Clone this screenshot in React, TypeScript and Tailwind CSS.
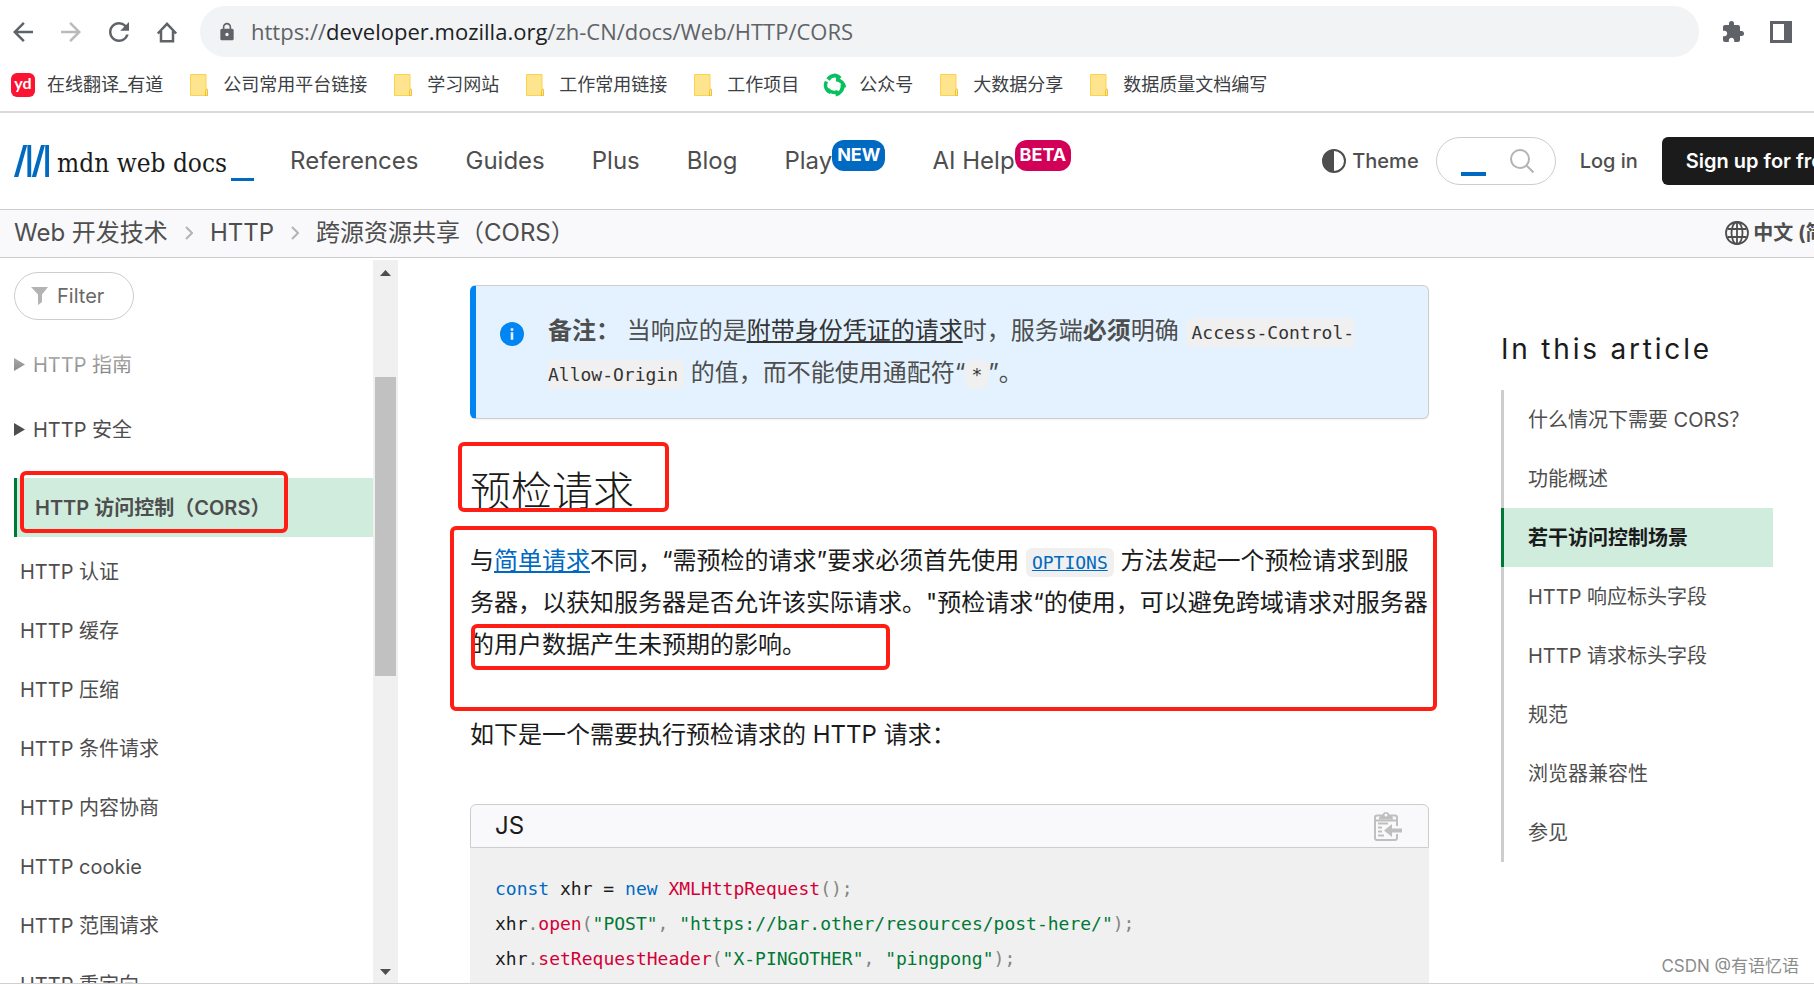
import type { ReactNode } from "react";
import {
  MdArrowBack,
  MdArrowForward,
  MdExtension,
  MdLock,
  MdRefresh,
} from "react-icons/md";

const bookmarks = [
  { label: "在线翻译_有道", icon: "youdao" },
  { label: "公司常用平台链接", icon: "folder" },
  { label: "学习网站", icon: "folder" },
  { label: "工作常用链接", icon: "folder" },
  { label: "工作项目", icon: "folder" },
  { label: "公众号", icon: "wechat" },
  { label: "大数据分享", icon: "folder" },
  { label: "数据质量文档编写", icon: "folder" },
];

const sidebarLinks = [
  "HTTP 认证",
  "HTTP 缓存",
  "HTTP 压缩",
  "HTTP 条件请求",
  "HTTP 内容协商",
  "HTTP cookie",
  "HTTP 范围请求",
  "HTTP 重定向",
];

const tocLinks = [
  "什么情况下需要 CORS？",
  "功能概述",
  "若干访问控制场景",
  "HTTP 响应标头字段",
  "HTTP 请求标头字段",
  "规范",
  "浏览器兼容性",
  "参见",
];

function HomeIcon() {
  return (
    <svg viewBox="0 0 30 30" className="size-[30px]" fill="none" stroke="currentColor" strokeWidth="2.5">
      <path d="M5.8 16.5 15 6.8l9.200 9.700M9 14v10.300h12V14" strokeLinejoin="miter" />
    </svg>
  );
}

function SidePanelIcon() {
  return (
    <svg viewBox="0 0 24 24" className="size-6" fill="currentColor">
      <path fillRule="evenodd" d="M1 1h22v22H1zM4 4v16h11V4z" />
    </svg>
  );
}

function YoudaoIcon() {
  return (
    <span className="flex size-6 items-center justify-center rounded-md bg-[#fa1432] pb-1 font-['Lato',sans-serif] text-base leading-none font-bold text-white">
      yd
    </span>
  );
}

function FolderIcon() {
  return (
    <svg viewBox="0 0 24 24" className="size-6">
      <path d="M3.500 1.500h15.500v14.500h1.500v6.500h-17z" fill="#ffe48f" stroke="#fbd44f" />
      <path d="M18.500 22.500v-5a1 1 0 0 1 2 0v5z" fill="#ffe9a6" stroke="#eec22f" />
    </svg>
  );
}

function WechatIcon() {
  return (
    <svg viewBox="0 0 24 24" className="size-6" fill="none" stroke="#07c160" strokeWidth="4">
      <path d="M5 6.500C8.500 1.500 13.500 1.500 17 5.500" />
      <path d="M13 6.500c5 .3 8 4.500 8.500 8" strokeWidth="3.500" />
      <path d="M19.500 11c1 5-2 9-7 10.500" />
      <path d="M15 18.500c-4.500 2-8 .5-10.500-2.500" strokeWidth="3.500" />
      <path d="M7.500 19.500C2.500 17.500 1.500 12 3.500 8.500" strokeWidth="3.500" />
    </svg>
  );
}

function MdnMark() {
  return (
    <svg viewBox="0 0 35 32" className="h-8 w-[35px]" fill="#0069c2">
      <path d="M9.200 0h4L4.300 32H0zM13.400 0h3.800v32h-3.800zM27 0h4l-8.900 32h-4.300zM31.200 0H35v32h-3.800z" />
    </svg>
  );
}

function ThemeIcon() {
  return (
    <svg viewBox="0 0 24 24" className="size-6" fill="#4e4e4e">
      <path fillRule="evenodd" d="M12 0a12 12 0 1 0 0 24 12 12 0 0 0 0-24zm0 2a10 10 0 0 1 0 20z" />
    </svg>
  );
}

function SearchIcon() {
  return (
    <svg viewBox="0 0 24 24" className="size-6" fill="none" stroke="#b3b3b3" strokeWidth="2">
      <circle cx="10" cy="10" r="9" />
      <path d="m16.500 16.500 7 7" />
    </svg>
  );
}

function GlobeIcon() {
  return (
    <svg viewBox="0 0 24 24" className="size-6" fill="none" stroke="#4e4e4e" strokeWidth="1.800">
      <circle cx="12" cy="12" r="11" />
      <ellipse cx="12" cy="12" rx="5.500" ry="11" />
      <path d="M12 1v22M2.500 8h19M2.500 16h19" />
    </svg>
  );
}

function FilterIcon() {
  return (
    <svg viewBox="0 0 18 18" className="size-[18px]" fill="#b3b3b3">
      <path d="M0 0h17l-6 7.500V15l-4 3V7.500z" />
    </svg>
  );
}

function InfoIcon() {
  return (
    <svg viewBox="0 0 24 24" className="mt-3 size-6 shrink-0">
      <circle cx="12" cy="12" r="12" fill="#0085f2" />
      <path d="M10.700 6.300h2.600v2.400h-2.600zM10.700 10.300h2.600v7.500h-2.600z" fill="#e3f2fe" />
    </svg>
  );
}

function CopyIcon() {
  return (
    <svg viewBox="0 0 28 30" className="h-[30px] w-7" fill="none" stroke="#bfbfbf" strokeWidth="2">
      <path d="M23 15V6.500a2 2 0 0 0-2-2H3a2 2 0 0 0-2 2V27a2 2 0 0 0 2 2h18a2 2 0 0 0 2-2v-4" />
      <path d="M5 8.500c0-3 1-4 3.500-4 0-2 1.500-3.500 3.500-3.500s3.500 1.500 3.500 3.500c2.500 0 3.500 1 3.500 4z" fill="#bfbfbf" stroke="none" />
      <circle cx="12" cy="4" r="1.500" fill="#f9f9fb" stroke="none" />
      <path d="M1 9.500h22M4 12.500h10M4 16.500h4M4 20.500h4M4 24.500h6" />
      <path d="M10 19.500 18 13v4.500h10v4H18V26z" fill="#bfbfbf" stroke="none" />
    </svg>
  );
}

// Hand-marked frame, laid over the element it highlights
function Mark({ className }: { className: string }) {
  return (
    <span
      aria-hidden="true"
      className={`pointer-events-none absolute rounded-md border-4 border-[#ff1e14] ${className}`}
    />
  );
}

function BrowserBar() {
  return (
    <div className="shrink-0 border-b-2 border-[#dadada]">
      <div className="flex items-center gap-[18px] pt-1.5 pr-[21px] pl-2 text-[#5f6368]">
        <button aria-label="Back"><MdArrowBack size={30} /></button>
        <button aria-label="Forward" className="text-[#bababc]"><MdArrowForward size={30} /></button>
        <button aria-label="Reload"><MdRefresh size={30} /></button>
        <button aria-label="Home"><HomeIcon /></button>
        <div className="flex h-[51px] flex-1 items-center gap-3.5 rounded-full bg-[#f1f3f4] pl-[17px] font-['Open_Sans',sans-serif] text-[22px]">
          <MdLock size={20} />
          <span>
            https://<span className="text-[#202124]">developer.mozilla.org</span>/zh-CN/docs/Web/HTTP/CORS
          </span>
        </div>
        <div className="flex items-center gap-6 pl-1">
          <button aria-label="Extensions"><MdExtension size={24} /></button>
          <button aria-label="Side panel"><SidePanelIcon /></button>
        </div>
      </div>
      <div className="flex h-[54px] items-center gap-6 px-[11px] pt-0.5 text-lg text-[#3c4043]">
        {bookmarks.map((item) => (
          <a key={item.label} href="#" className="flex items-center gap-3">
            {item.icon === "youdao" && <YoudaoIcon />}
            {item.icon === "folder" && <FolderIcon />}
            {item.icon === "wechat" && <WechatIcon />}
            <span>{item.label}</span>
          </a>
        ))}
      </div>
    </div>
  );
}

function Badge({ className, children }: { className: string; children: ReactNode }) {
  return (
    <span className={`-mt-3 flex h-[31px] items-center rounded-xl px-[5px] text-lg font-bold text-white ${className}`}>
      {children}
    </span>
  );
}

function SiteHeader() {
  return (
    <header className="shrink-0 border-b border-[#cdcdcd]">
      {/* The bar is wider than the window, so the sign-up button runs off the edge */}
      <div className="-mr-[45px] flex h-24 items-center pl-3.5 text-2xl whitespace-nowrap text-[#4e4e4e]">
        <a href="#" className="mr-9 flex items-center gap-2">
          <MdnMark />
          <span className="flex items-end text-[#1b1b1b]">
            <span className="pt-1 font-['DejaVu_Serif_Condensed','DejaVu_Serif',serif] text-[26px] leading-9">mdn web docs</span>
            <span className="ml-1 h-[3px] w-[23px] bg-[#0069c2]" />
          </span>
        </a>
        <nav className="flex flex-1 items-center gap-[47px]">
          <a href="#">References</a>
          <a href="#">Guides</a>
          <a href="#">Plus</a>
          <a href="#">Blog</a>
          <a href="#" className="flex items-center">
            Play<Badge className="bg-[#0069c2]">NEW</Badge>
          </a>
          <a href="#" className="flex items-center">
            AI Help<Badge className="bg-[#d30058]">BETA</Badge>
          </a>
        </nav>
        <div className="flex items-center text-xl font-medium">
          <button className="mr-[17px] flex items-center gap-1.5">
            <ThemeIcon />
            Theme
          </button>
          <form className="mr-6 flex h-12 w-[120px] items-center justify-between rounded-full border border-[#cdcdcd] pr-[21px] pl-6">
            <input
              type="search"
              aria-label="Search MDN"
              className="mt-2.5 h-5 w-[25px] appearance-none border-b-4 border-[#0069c2] outline-none"
            />
            <button type="button" aria-label="Search"><SearchIcon /></button>
          </form>
          <a href="#" className="mr-6">Log in</a>
          <a href="#" className="flex h-12 items-center rounded-md bg-[#1b1b1b] px-6 font-semibold text-white">
            Sign up for free
          </a>
        </div>
      </div>
    </header>
  );
}

function Chevron() {
  return (
    <svg viewBox="0 0 8 14" className="h-3.5 w-2" fill="none" stroke="#b3b3b3" strokeWidth="2">
      <path d="m1 1 6 6-6 6" />
    </svg>
  );
}

function Breadcrumbs() {
  return (
    <div className="shrink-0 border-b border-[#cdcdcd] bg-[#f9f9fb]">
      <div className="-mr-[39px] flex h-[47px] items-center justify-between pb-0.5 pl-3.5 text-2xl whitespace-nowrap text-[#4e4e4e]">
        <nav aria-label="Breadcrumb" className="flex items-center gap-[17px]">
          <a href="#">Web 开发技术</a>
          <Chevron />
          <a href="#">HTTP</a>
          <Chevron />
          <a href="#">跨源资源共享（CORS）</a>
        </nav>
        <button className="flex items-center gap-1 text-xl font-bold">
          <GlobeIcon />
          中文 (简体)
        </button>
      </div>
    </div>
  );
}

function SidebarGroup({ label }: { label: string }) {
  return (
    <button className="flex h-[65px] items-center gap-2">
      <svg viewBox="0 0 11 13" className="h-[13px] w-[11px]" fill="#4e4e4e">
        <path d="M0 0l11 6.500L0 13z" />
      </svg>
      {label}
    </button>
  );
}

function Sidebar() {
  return (
    <aside className="flex w-[398px] shrink-0">
      <div className="min-w-0 flex-1 pt-3 pl-3.5 text-xl text-[#4e4e4e]">
        <label className="flex h-12 w-[120px] items-center gap-2 rounded-full border border-[#cdcdcd] pl-4">
          <FilterIcon />
          <input
            type="text"
            placeholder="Filter"
            aria-label="Filter sidebar"
            className="w-16 outline-none placeholder:text-[#696969]"
          />
        </label>
        <div className="relative flex flex-col pt-3">
          <SidebarGroup label="HTTP 指南" />
          <SidebarGroup label="HTTP 安全" />
          {/* Items scroll out beneath the filter box */}
          <div className="pointer-events-none absolute inset-x-0 top-0 h-[78px] bg-linear-to-b from-white to-transparent" />
        </div>
        <ul className="mt-4">
          <li className="relative">
            <a
              href="#"
              aria-current="page"
              className="flex h-[59px] items-center border-l-[3px] border-[#007936] bg-[#d0ecdd] pl-[18px] font-semibold"
            >
              HTTP 访问控制（CORS）
            </a>
            <Mark className="-top-[7px] left-1.5 h-[62px] w-[268px]" />
          </li>
          {sidebarLinks.map((label) => (
            <li key={label}>
              <a href="#" className="flex h-[59px] items-center pt-2.5 pl-1.5">
                {label}
              </a>
            </li>
          ))}
        </ul>
      </div>
      <div aria-hidden="true" className="flex w-[25px] flex-col items-center justify-between bg-[#f0f0f0] py-2">
        <svg viewBox="0 0 11 6" className="mt-0.5 h-1.5 w-[11px]" fill="#4e4e4e"><path d="M0 6 5.500 0 11 6z" /></svg>
        <div className="mt-[101px] h-[299px] w-[21px] bg-[#c1c1c1]" />
        <div className="flex-1" />
        <svg viewBox="0 0 11 6" className="h-1.5 w-[11px]" fill="#4e4e4e"><path d="M0 0 5.500 6 11 0z" /></svg>
      </div>
    </aside>
  );
}

function Code({ children }: { children: ReactNode }) {
  return (
    <code className="rounded-md bg-[#f0f0f0] px-1.5 py-1 font-['DejaVu_Sans_Mono',monospace] text-lg text-[#343434]">
      {children}
    </code>
  );
}

const Kw = ({ children }: { children: ReactNode }) => <span className="text-[#0069c2]">{children}</span>;
const Fn = ({ children }: { children: ReactNode }) => <span className="text-[#d30038]">{children}</span>;
const Str = ({ children }: { children: ReactNode }) => <span className="text-[#007936]">{children}</span>;
const Pn = ({ children }: { children: ReactNode }) => <span className="text-[#858585]">{children}</span>;

function Article() {
  return (
    <main className="ml-[72px] min-w-0 flex-1 pt-[25px] text-2xl leading-[42px] text-[#1b1b1b]">
      <div className="flex gap-6 rounded-md border border-l-[6px] border-[#cdcdcd] border-l-[#0085f2] bg-[#e3f2fe] p-6 text-[#4e4e4e] shadow-xs">
        <InfoIcon />
        <p>
          <strong>备注：</strong> 当响应的是
          <a href="#" className="text-[#343434] underline">附带身份凭证的请求</a>
          时，服务端<strong>必须</strong>明确 <Code>Access-Control-Allow-Origin</Code>{" "}
          的值，而不能使用通配符“<Code>*</Code>”。
        </p>
      </div>

      <div className="relative mt-12">
        <h3 className="text-[41px] leading-[48px] font-light">预检请求</h3>
        <Mark className="-top-[25px] -left-3 h-[70px] w-[211px]" />
      </div>

      <div className="relative mt-[25px]">
        <p>
          与<a href="#" className="text-[#0069c2] underline">简单请求</a>
          不同，“需预检的请求”要求必须首先使用{" "}
          <Code><a href="#" className="text-[#0069c2] underline">OPTIONS</a></Code>{" "}
          方法发起一个预检请求到服务器，以获知服务器是否允许该实际请求。"预检请求“的使用，可以避免跨域请求对服务器的用户数据产生未预期的影响。
        </p>
        <Mark className="-top-3.5 -right-2 -left-5 h-[185px]" />
        <Mark className="top-[84px] left-px h-[46px] w-[419px]" />
      </div>
      <p className="mt-12">如下是一个需要执行预检请求的 HTTP 请求：</p>

      <div className="mt-12">
        <div className="flex h-11 items-center justify-between rounded-t-md border border-[#cdcdcd] bg-[#f9f9fb] pr-[26px] pl-6">
          <span>JS</span>
          <button aria-label="Copy to clipboard"><CopyIcon /></button>
        </div>
        <pre className="bg-[#f0f0f0] px-[25px] pt-[23px] pb-6 font-['DejaVu_Sans_Mono',monospace] text-lg leading-[35px]">
          <code className="font-['DejaVu_Sans_Mono',monospace]">
            <Kw>const</Kw> xhr = <Kw>new</Kw> <Fn>XMLHttpRequest</Fn><Pn>();</Pn>{"\n"}
            xhr<Pn>.</Pn><Fn>open</Fn><Pn>(</Pn><Str>"POST"</Str><Pn>,</Pn> <Str>"https://bar.other/resources/post-here/"</Str><Pn>);</Pn>{"\n"}
            xhr<Pn>.</Pn><Fn>setRequestHeader</Fn><Pn>(</Pn><Str>"X-PINGOTHER"</Str><Pn>,</Pn> <Str>"pingpong"</Str><Pn>);</Pn>
          </code>
        </pre>
      </div>
    </main>
  );
}

function Toc() {
  return (
    <aside className="mr-[41px] ml-[72px] w-[272px] shrink-0 pt-[71px]">
      <h2 className="text-[28px] leading-9 tracking-widest text-[#1b1b1b]">In this article</h2>
      <ul className="mt-[23px] text-xl text-[#4e4e4e]">
        {tocLinks.map((label, i) => (
          <li key={label}>
            <a
              href="#"
              className={`flex h-[59px] items-center border-l-[3px] pl-6 ${
                i === 2
                  ? "border-[#007936] bg-[#d0ecdd] font-semibold text-[#1b1b1b]"
                  : "border-[#cdcdcd]"
              }`}
            >
              {label}
            </a>
          </li>
        ))}
      </ul>
    </aside>
  );
}

export default function App() {
  return (
    <div
      lang="zh-CN"
      className="relative flex h-screen flex-col overflow-hidden border-b border-[#d0d0d0] bg-white font-['Inter','Noto_Sans_CJK_SC',sans-serif]"
    >
      <BrowserBar />
      <SiteHeader />
      <Breadcrumbs />
      <div className="flex min-h-0 flex-1 overflow-hidden pt-0.5">
        <Sidebar />
        <Article />
        <Toc />
      </div>
      <span className="absolute right-[15px] bottom-1 text-[17px] text-[#8c8c8c]">CSDN @有语忆语</span>
    </div>
  );
}
